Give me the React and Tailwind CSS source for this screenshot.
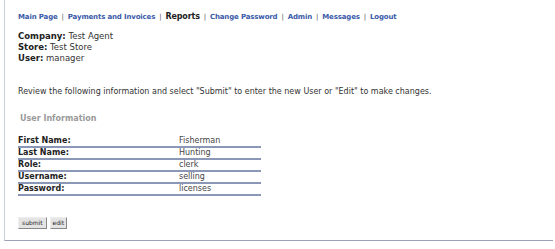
const navLinks = [
    { label: "Main Page" },
    { label: "Payments and Invoices" },
    { label: "Reports", current: true },
    { label: "Change Password" },
    { label: "Admin" },
    { label: "Messages" },
    { label: "Logout" }
];

const userRows = [
    { label: "First Name:", value: "Fisherman" },
    { label: "Last Name:", value: "Hunting" },
    { label: "Role:", value: "clerk" },
    { label: "Username:", value: "selling" },
    { label: "Password:", value: "licenses" }
];

const App = () => {
    return (
        <div className="h-[249px] w-[555px] bg-white font-['DejaVu_Sans',Verdana,sans-serif] text-[8px] text-[#333]">
            <div className="ml-[4px] mr-[2px] h-[241px] border-b border-l border-b-[#9aa3b5] border-l-[#c9d0dc] pl-[13px] pt-[11px]">
                <nav className="flex items-center text-[7px] font-bold leading-[12px] tracking-[-0.15px]">
                    {navLinks.map((link, i) => (
                        <span key={link.label} className="flex items-center">
                            {i > 0 && <span className="mx-[4px] font-normal text-[#555]">|</span>}
                            {link.current ? (
                                <span className="text-[8px] text-[#222]">{link.label}</span>
                            ) : (
                                <a href="#" className="text-[#3a5aa8]">
                                    {link.label}
                                </a>
                            )}
                        </span>
                    ))}
                </nav>

                <div className="mt-[8px] text-[8.5px] leading-[11px] text-[#333]">
                    <p><span className="font-bold text-[#222]">Company:</span> Test Agent</p>
                    <p><span className="font-bold text-[#222]">Store:</span> Test Store</p>
                    <p><span className="font-bold text-[#222]">User:</span> manager</p>
                </div>

                <p className="mt-[22px] text-[8px] leading-[11px] text-[#333]">
                    Review the following information and select "Submit" to enter the new User or "Edit" to make changes.
                </p>

                <h3 className="mt-[16px] pl-[2px] text-[8px] font-bold leading-[11px] text-[#9a9a9a]">User Information</h3>

                <table className="mt-[12px] w-[243px] border-collapse text-[8px] leading-[9px]">
                    <tbody>
                        {userRows.map((row) => (
                            <tr key={row.label} className="border-b-2 border-b-[#8a97b6]">
                                <td className="w-[161px] p-0 pb-[1px] font-bold text-[#222]">{row.label}</td>
                                <td className="p-0 pb-[1px] text-[#444]">{row.value}</td>
                            </tr>
                        ))}
                    </tbody>
                </table>

                <div className="mt-[21px] flex gap-[3px]">
                    <button className="h-[12px] border border-t-[#eee] border-l-[#eee] border-b-[#888] border-r-[#888] bg-[#e4e4e4] px-[3px] text-[6px] leading-[10px] text-[#222]">
                        submit
                    </button>
                    <button className="h-[12px] border border-t-[#eee] border-l-[#eee] border-b-[#888] border-r-[#888] bg-[#e4e4e4] px-[2px] text-[6px] leading-[10px] text-[#222]">
                        edit
                    </button>
                </div>
            </div>
        </div>
    );
};

export default App;
